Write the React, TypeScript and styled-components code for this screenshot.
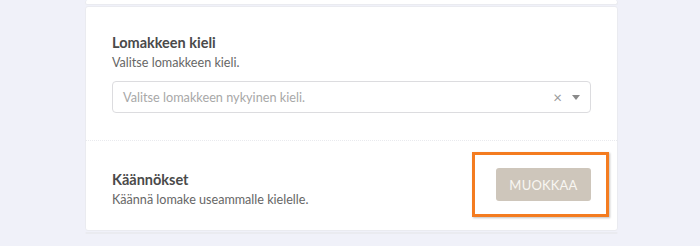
import React from "react";
import styled, { createGlobalStyle } from "styled-components";

const GlobalStyle = createGlobalStyle`
  body {
    margin: 0;
    background: #f0f1f9;
    font-family: Lato, "Open Sans", sans-serif;
  }
`;

const Page = styled.div`
  width: 533px;
  margin-left: 85px;
  display: flex;
  flex-direction: column;
  gap: 1px;
  height: 246px;
  overflow: hidden;
`;

const Card = styled.div<{ $stub?: boolean }>`
  background: #fff;
  border: 1px solid #eaebf0;
  border-radius: 3px;
  ${(p) => (p.$stub ? "height: 4px; border-top: none;" : "")}
`;

const Section = styled.div<{ $row?: boolean }>`
  padding: ${(p) => (p.$row ? "27px 26px 20px" : "26px 26px 27px")};
  display: flex;
  flex-direction: ${(p) => (p.$row ? "row" : "column")};
  align-items: stretch;
  justify-content: space-between;
  & + & {
    border-top: 1px dotted #e9eaee;
  }
`;

const TextBlock = styled.div`
  display: flex;
  flex-direction: column;
  margin-top: 2px;
`;

const Title = styled.div`
  font-size: 14.5px;
  font-weight: 700;
  line-height: 20px;
  color: #4a4a4a;
`;

const Hint = styled.div`
  font-size: 12.6px;
  line-height: 20px;
  color: #666;
`;

const Select = styled.div`
  margin-top: 8px;
  height: 32px;
  box-sizing: border-box;
  border: 1px solid #dcdcdf;
  border-radius: 4px;
  display: flex;
  align-items: center;
  padding: 0 10px;
  gap: 10px;
`;

const Placeholder = styled.span`
  flex: 1;
  font-size: 12.7px;
  color: #a8a8a8;
`;

const Clear = styled.span`
  font-size: 15px;
  color: #9a9a9a;
  line-height: 1;
`;

const Caret = styled.span`
  width: 0;
  height: 0;
  border-left: 4px solid transparent;
  border-right: 4px solid transparent;
  border-top: 5px solid #8a8a8a;
`;

const ButtonWrap = styled.div`
  position: relative;
  align-self: flex-start;
`;

const Highlight = styled.div`
  position: absolute;
  left: -24px;
  right: -18px;
  top: -16px;
  bottom: -16px;
  border: 3px solid #f47c20;
  box-shadow: 1px 1px 2px rgba(0, 0, 0, 0.25);
  pointer-events: none;
`;

const Button = styled.button`
  display: block;
  width: 95px;
  height: 33px;
  border: none;
  border-radius: 3px;
  background: #cec6bb;
  color: #f8f6f2;
  font-family: Lato, "Open Sans", sans-serif;
  font-size: 13px;
  letter-spacing: 0.2px;
  text-transform: uppercase;
`;

export default function App() {
  return (
    <>
      <GlobalStyle />
      <Page>
        <Card $stub />
        <Card>
          <Section>
            <Title>Lomakkeen kieli</Title>
            <Hint>Valitse lomakkeen kieli.</Hint>
            <Select>
              <Placeholder>Valitse lomakkeen nykyinen kieli.</Placeholder>
              <Clear>×</Clear>
              <Caret />
            </Select>
          </Section>
          <Section $row>
            <TextBlock>
              <Title>Käännökset</Title>
              <Hint>Käännä lomake useammalle kielelle.</Hint>
            </TextBlock>
            <ButtonWrap>
              <Button>Muokkaa</Button>
              <Highlight />
            </ButtonWrap>
          </Section>
        </Card>
        <Card />
      </Page>
    </>
  );
}
